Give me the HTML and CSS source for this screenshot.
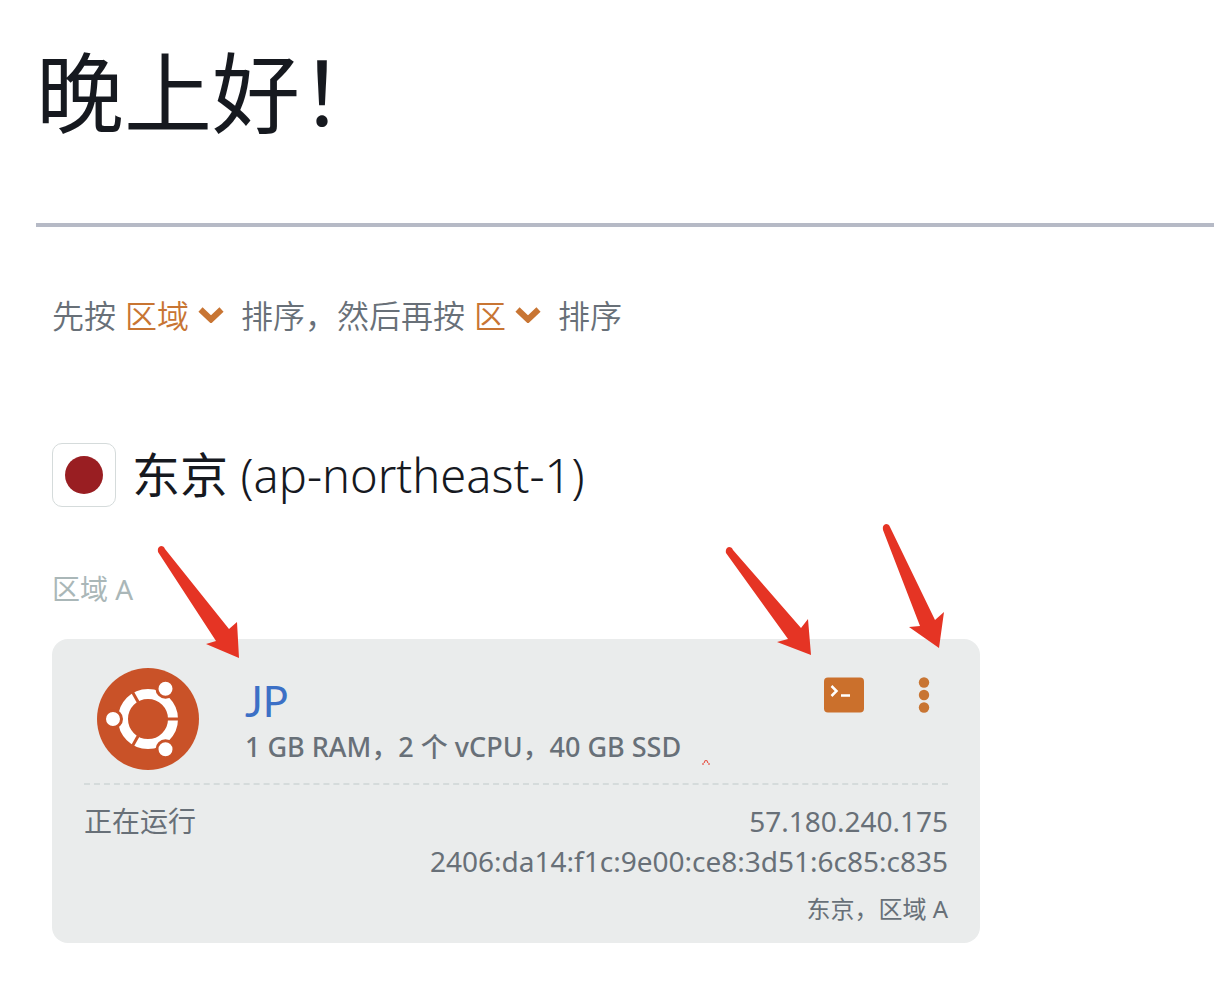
FILE: index.html
```html
<!DOCTYPE html>
<html lang="zh-CN">
  <head>
    <meta charset="UTF-8">
    <meta name="viewport" content="width=device-width, initial-scale=1.0">
    <title>Lightsail</title>
    <link rel="stylesheet" href="styles.css">
  </head>
  <body>
    <main class="page">
      <header class="page-header">
        <h1 class="greeting">晚上好！</h1>
      </header>

      <form class="sort-bar">
        <label for="sortFirst">先按</label>
        <span class="sort-select">
          <select id="sortFirst"><option>区域</option></select>
          <svg width="26" height="18" viewBox="0 0 26 18"><path d="M2.500 4.500 13 14.500 23.500 4.500" /></svg>
        </span>
        <label for="sortSecond">排序，然后再按</label>
        <span class="sort-select">
          <select id="sortSecond"><option>区</option></select>
          <svg width="26" height="18" viewBox="0 0 26 18"><path d="M2.500 4.500 13 14.500 23.500 4.500" /></svg>
        </span>
        <span>排序</span>
      </form>

      <section class="region">
        <div class="region-title">
          <span class="flag"></span>
          <h2>东京 <span class="region-code">(ap-northeast-1)</span></h2>
        </div>
        <h3 class="zone">区域 A</h3>

        <article class="card">
          <div class="card-head">
            <!-- Ubuntu logo -->
            <svg class="os-logo" width="102" height="102" viewBox="-51 -51 102 102">
              <circle r="51" fill="#c95228" />
              <circle r="25" fill="none" stroke="#fff" stroke-width="10" />
              <g stroke="#c95228" stroke-width="3">
                <path d="M18 0H32" />
                <path d="M18 0H32" transform="rotate(120)" />
                <path d="M18 0H32" transform="rotate(240)" />
              </g>
              <g fill="#fff" stroke="#c95228" stroke-width="3">
                <circle cx="-35" r="8.500" />
                <circle cx="17.500" cy="-30.300" r="8.500" />
                <circle cx="17.500" cy="30.300" r="8.500" />
              </g>
            </svg>
            <div class="card-info">
              <a class="instance-name" href="#">JP</a>
              <p class="specs">1 GB RAM，2 个 vCPU，40 GB SSD
                <svg class="mark" width="8" height="6" viewBox="0 0 8 6"><path d="M0 5h2M2 4 3.500 1M4.500 1 6 4M6 5h2" /></svg>
              </p>
            </div>
            <div class="card-actions">
              <button type="button" aria-label="连接">
                <svg width="40" height="36" viewBox="0 0 40 36">
                  <rect width="40" height="35" y="0.500" rx="4" fill="#cb702c" />
                  <path d="M7.500 9 12.500 14 7.500 19M17 18.500h9" fill="none" stroke="#fff" stroke-width="2.500" />
                </svg>
              </button>
              <button type="button" aria-label="更多">
                <svg width="12" height="36" viewBox="0 0 12 36" fill="#c87533">
                  <circle cx="6" cy="5.500" r="5.200" />
                  <circle cx="6" cy="18" r="5.200" />
                  <circle cx="6" cy="30.500" r="5.200" />
                </svg>
              </button>
            </div>
          </div>

          <div class="card-body">
            <p class="status">正在运行</p>
            <div class="network">
              <p>57.180.240.175</p>
              <p>2406:da14:f1c:9e00:ce8:3d51:6c85:c835</p>
              <p class="location">东京，区域 A</p>
            </div>
          </div>

          <!-- arrows pointing at the name, the terminal and the menu -->
          <svg class="arrow arrow-name" width="84" height="114" viewBox="0 0 84 114">
            <path d="M1 6Q0 1 4 0Q7 0 8 3L72 83 80 76 82 112 49 98 59 95Z" />
          </svg>
          <svg class="arrow arrow-terminal" width="88" height="110" viewBox="0 0 88 110">
            <path d="M1 6Q0 1 4 0Q7 0 8 3L76 81 83 72 86 108 52 95 63 92Z" />
          </svg>
          <svg class="arrow arrow-menu" width="64" height="126" viewBox="0 0 64 126">
            <path d="M1 6Q0 1 4 0Q7 0 8 3L53 96 62 88 57 124 27 103 38 102Z" />
          </svg>
        </article>
      </section>
    </main>
  </body>
</html>
```
FILE: styles.css
```css
* {
  box-sizing: border-box;
}

body {
  margin: 0;
  background-color: #fff;
  color: #687078;
  font-family: "Noto Sans", "Noto Sans CJK SC", sans-serif;
  font-size: 28px;
}

h1, h2, h3, p {
  margin: 0;
  font-weight: 400;
}

.page {
  padding: 32px 0 36px 36px;
}

.page-header {
  padding-bottom: 79px;
  border-bottom: 4px solid #b6bac6;
}

.greeting {
  color: #16191f;
  font-family: "Noto Sans CJK SC", sans-serif;
  font-size: 88px;
  line-height: 112px;
}

/* sort line */
.sort-bar {
  display: flex;
  flex-wrap: wrap;
  align-items: center;
  gap: 9px;
  padding: 63px 16px 0;
  font-family: "Noto Sans CJK SC", sans-serif;
  font-size: 32px;
  font-weight: 350;
  line-height: 48px;
}

.sort-select {
  display: inline-flex;
  align-items: center;
  gap: 8px;
  margin-right: 8px;
}

.sort-select select {
  appearance: none;
  padding: 0;
  border: 0;
  background: none;
  color: #c87533;
  font: inherit;
  cursor: pointer;
}

.sort-select path {
  fill: none;
  stroke: #c87533;
  stroke-width: 6;
}

/* region */
.region {
  padding: 105px 16px 0;
}

.region-title {
  display: flex;
  align-items: center;
  gap: 16px;
}

.region-title h2 {
  color: #16191f;
  font-size: 48px;
  line-height: 64px;
}

.region-code {
  font-size: 47px;
  font-weight: 300;
}

.flag {
  display: flex;
  align-items: center;
  justify-content: center;
  width: 64px;
  height: 64px;
  border: 1px solid #d5dbdb;
  border-radius: 10px;
}

.flag::before {
  content: "";
  width: 38px;
  height: 38px;
  border-radius: 50%;
  background-color: #991e22;
}

.zone {
  margin: 62px 0 30px;
  color: #aab7b8;
  font-size: 28px;
  line-height: 40px;
}

/* instance card */
.card {
  position: relative;
  max-width: 928px;
  padding: 0 32px 16px;
  border-radius: 16px;
  background-color: #eaecec;
}

.card-head {
  display: flex;
  align-items: flex-end;
  padding: 29px 0 13px 13px;
  border-bottom: 2px dashed #d5dbdb;
}

.card-info {
  flex: 1;
  margin-left: 46px;
  line-height: 48px;
}

.instance-name {
  display: block;
  color: #3c70c6;
  font-family: Lato, sans-serif;
  font-size: 42px;
  line-height: 46px;
  text-decoration: none;
}

.specs {
  font-size: 27px;
  font-weight: 500;
  line-height: 46px;
}

.mark {
  margin-left: 14px;
  vertical-align: -8px;
  fill: none;
  stroke: #e53424;
}

.card-actions {
  display: flex;
  align-self: flex-start;
  gap: 54px;
  padding: 9px 18px 0 0;
}

.card-actions button {
  display: flex;
  padding: 0;
  border: 0;
  background: none;
  cursor: pointer;
}

.card-body {
  display: flex;
  justify-content: space-between;
  padding-top: 16px;
  line-height: 40px;
}

.network {
  text-align: right;
}

.location {
  margin-top: 10px;
  font-size: 24px;
  line-height: 36px;
}

.arrow {
  position: absolute;
  fill: #e53424;
  pointer-events: none;
}

.arrow-name {
  top: -93px;
  left: 105px;
}

.arrow-terminal {
  top: -92px;
  right: 167px;
}

.arrow-menu {
  top: -115px;
  right: 34px;
}
```
